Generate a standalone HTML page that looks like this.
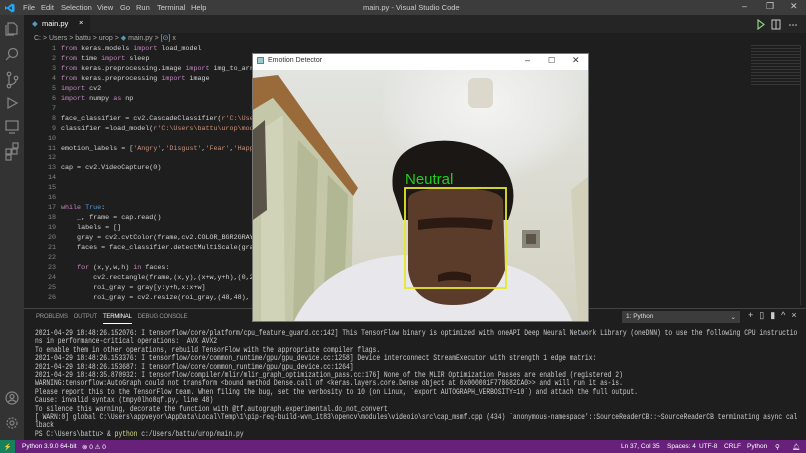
<!DOCTYPE html>
<html><head><meta charset="utf-8"><style>
*{margin:0;padding:0;box-sizing:border-box}
body{width:806px;height:453px;overflow:hidden;background:#1e1e1e;font-family:"Liberation Sans",sans-serif;position:relative;color:#ccc}
.abs{position:absolute}
#title{left:0;top:0;width:806px;height:15px;background:#3c3c3c;font-size:7.5px;color:#ccc}
#title span{position:absolute;top:3px}
#act{left:0;top:15px;width:24px;height:425px;background:#333}
#tabs{left:24px;top:15px;width:782px;height:18px;background:#252526}
#tab{left:24px;top:15px;width:66px;height:18px;background:#1e1e1e;font-size:7.5px;color:#fff}
#crumb{left:34px;top:34px;font-size:7px;color:#aaa}
.code{font-family:"Liberation Mono",monospace;font-size:6.7px;line-height:9.95px;white-space:pre}
#nums{left:30px;top:45px;width:26px;text-align:right;color:#858585}
#src{left:61px;top:45px;color:#d4d4d4}
.k{color:#c586c0}.s{color:#ce9178}.b{color:#569cd6}
#panel{left:24px;top:308px;width:782px;height:132px;background:#1e1e1e;border-top:1px solid #444}
#ptabs{left:36px;top:314px;font-size:6px;color:#999;letter-spacing:-.2px}
#term{left:35px;top:330px;font-family:"Liberation Mono",monospace;font-size:8px;line-height:8.4px;color:#ccc;white-space:pre;transform:scaleX(0.79);transform-origin:top left}
#status{left:0;top:440px;width:806px;height:13px;background:#68217a;color:#fff;font-size:6.5px}
#status span{position:absolute;top:3px}
#win{left:252px;top:53px;width:337px;height:269px;background:#fff;border:1px solid #777;overflow:hidden}
#cam{left:0;top:16px;width:337px;height:253px;overflow:hidden;background:linear-gradient(180deg,#e2e4e0 0%,#dcdcd3 40%,#d3d2c2 100%)}
</style></head><body>
<div id="title" class="abs">
<svg class="abs" style="left:5px;top:3px" width="10" height="10" viewBox="0 0 10 10"><path d="M7 0.5L9.5 1.7V8.3L7 9.5L2 5.5L0.5 6.8L0 6.3V3.7L0.5 3.2L2 4.5L7 0.5ZM7 3L4 5L7 7Z" fill="#23a9f2"/></svg>
<span style="left:23px">File</span><span style="left:41px">Edit</span><span style="left:61px">Selection</span><span style="left:97px">View</span><span style="left:120px">Go</span><span style="left:136px">Run</span><span style="left:157px">Terminal</span><span style="left:191px">Help</span>
<span style="left:363px">main.py - Visual Studio Code</span>
<span style="left:742px;top:1px;font-size:9px">–</span><span style="left:766px;top:1px;font-size:9px">❐</span><span style="left:790px;top:1px;font-size:9px">✕</span>
</div>
<div id="act" class="abs">
<svg class="abs" style="left:5px;top:6px" width="14" height="150" fill="none" stroke="#858585" stroke-width="1.2">
<path d="M3 2h6l3 3v8H3z M1 4v10h8"/>
<circle cx="8" cy="32" r="4.5"/><path d="M5 35l-4 4"/>
<circle cx="4" cy="53" r="1.8"/><circle cx="4" cy="65" r="1.8"/><circle cx="11" cy="57" r="1.8"/><path d="M4 55v8M11 59q0 4-7 5"/>
<path d="M3 77l9 5-9 5z"/>
<rect x="1" y="100" width="12" height="9"/><path d="M4 112h6"/>
<rect x="1" y="128" width="5" height="5"/><rect x="7" y="128" width="5" height="5"/><rect x="1" y="134" width="5" height="5"/><rect x="8" y="122" width="5" height="5"/>
</svg>
<svg class="abs" style="left:5px;top:376px" width="14" height="40" fill="none" stroke="#858585" stroke-width="1.2"><circle cx="7" cy="7" r="6"/><circle cx="7" cy="5.5" r="2"/><path d="M3 11q4-4 8 0"/><circle cx="7" cy="32" r="5" stroke-dasharray="2 1.3"/><circle cx="7" cy="32" r="2"/></svg>
</div>
<div id="tabs" class="abs"></div>
<div id="tab" class="abs"><span class="abs" style="left:8px;top:4px;color:#519aba">◆</span><span class="abs" style="left:18px;top:4px">main.py</span><span class="abs" style="left:55px;top:3px">×</span></div>
<svg class="abs" style="left:755px;top:19px" width="45" height="11"><path d="M3 1l6 4.5-6 4.5z" fill="none" stroke="#89d185" stroke-width="1.2"/><rect x="17" y="1" width="8" height="9" fill="none" stroke="#ccc"/><path d="M21 1v9" stroke="#ccc"/><circle cx="35" cy="6" r=".8" fill="#ccc"/><circle cx="38" cy="6" r=".8" fill="#ccc"/><circle cx="41" cy="6" r=".8" fill="#ccc"/></svg>
<div id="crumb" class="abs">C: &gt; Users &gt; battu &gt; urop &gt; <span style="color:#519aba">◆</span> main.py &gt; <span style="color:#75beff">[⊙]</span> x</div>
<div id="nums" class="abs code">1
2
3
4
5
6
7
8
9
10
11
12
13
14
15
16
17
18
19
20
21
22
23
24
25
26</div>
<div id="src" class="abs code"><span class="k">from</span> keras.models <span class="k">import</span> load_model
<span class="k">from</span> time <span class="k">import</span> sleep
<span class="k">from</span> keras.preprocessing.image <span class="k">import</span> img_to_array
<span class="k">from</span> keras.preprocessing <span class="k">import</span> image
<span class="k">import</span> cv2
<span class="k">import</span> numpy <span class="k">as</span> np

face_classifier = cv2.CascadeClassifier(<span class="s">r'C:\Users</span>
classifier =load_model(<span class="s">r'C:\Users\battu\urop\model</span>

emotion_labels = [<span class="s">'Angry'</span>,<span class="s">'Disgust'</span>,<span class="s">'Fear'</span>,<span class="s">'Happy'</span>

cap = cv2.VideoCapture(0)



<span class="k">while</span> <span class="b">True</span>:
    _, frame = cap.read()
    labels = []
    gray = cv2.cvtColor(frame,cv2.COLOR_BGR2GRAY)
    faces = face_classifier.detectMultiScale(gray
 
    <span class="k">for</span> (x,y,w,h) <span class="k">in</span> faces:
        cv2.rectangle(frame,(x,y),(x+w,y+h),(0,255
        roi_gray = gray[y:y+h,x:x+w]
        roi_gray = cv2.resize(roi_gray,(48,48),</div>
<div class="abs" style="left:751px;top:45px;width:50px;height:40px;background:repeating-linear-gradient(180deg,#555 0 1px,transparent 1px 3px);opacity:.45"></div>
<div class="abs" style="left:800px;top:45px;width:1px;height:260px;background:#333"></div>
<div id="panel" class="abs"></div>
<div id="ptabs" class="abs"><span>PROBLEMS</span>&nbsp;&nbsp;&nbsp;&nbsp;<span>OUTPUT</span>&nbsp;&nbsp;&nbsp;&nbsp;<span style="color:#fff;border-bottom:1px solid #fff;padding-bottom:3px">TERMINAL</span>&nbsp;&nbsp;&nbsp;&nbsp;<span>DEBUG CONSOLE</span></div>
<div class="abs" style="left:622px;top:311px;width:118px;height:12px;background:#3c3c3c;font-size:6.5px;color:#ddd;padding:2px 4px">1: Python<span style="float:right">⌄</span></div>
<div class="abs" style="left:748px;top:310px;font-size:9px;color:#ccc;letter-spacing:6px">+▯▮^×</div>
<div id="term" class="abs">2021-04-29 18:48:26.152076: I tensorflow/core/platform/cpu_feature_guard.cc:142] This TensorFlow binary is optimized with oneAPI Deep Neural Network Library (oneDNN) to use the following CPU instructio
ns in performance-critical operations:  AVX AVX2
To enable them in other operations, rebuild TensorFlow with the appropriate compiler flags.
2021-04-29 18:48:26.153376: I tensorflow/core/common_runtime/gpu/gpu_device.cc:1258] Device interconnect StreamExecutor with strength 1 edge matrix:
2021-04-29 18:48:26.153687: I tensorflow/core/common_runtime/gpu/gpu_device.cc:1264]
2021-04-29 18:48:35.870932: I tensorflow/compiler/mlir/mlir_graph_optimization_pass.cc:176] None of the MLIR Optimization Passes are enabled (registered 2)
WARNING:tensorflow:AutoGraph could not transform &lt;bound method Dense.call of &lt;keras.layers.core.Dense object at 0x000001F778682CA0&gt;&gt; and will run it as-is.
Please report this to the TensorFlow team. When filing the bug, set the verbosity to 10 (on Linux, `export AUTOGRAPH_VERBOSITY=10`) and attach the full output.
Cause: invalid syntax (tmpy0lho0qf.py, line 48)
To silence this warning, decorate the function with @tf.autograph.experimental.do_not_convert
[ WARN:0] global C:\Users\appveyor\AppData\Local\Temp\1\pip-req-build-wvn_it83\opencv\modules\videoio\src\cap_msmf.cpp (434) `anonymous-namespace'::SourceReaderCB::~SourceReaderCB terminating async cal
lback
PS C:\Users\battu&gt; &amp; <span style="color:#dcdc8b">python</span> c:/Users/battu/urop/main.py</div>
<div id="status" class="abs"><span style="left:0;top:0;width:15px;height:13px;background:#16825d;text-align:center;padding-top:3px">⚡</span><span style="left:22px">Python 3.9.0 64-bit</span><span style="left:82px">⊗ 0 ⚠ 0</span><span style="left:621px">Ln 37, Col 35</span><span style="left:667px">Spaces: 4</span><span style="left:699px">UTF-8</span><span style="left:724px">CRLF</span><span style="left:747px">Python</span><span style="left:775px">⚲</span><span style="left:792px">🔔︎</span></div>
<div id="win" class="abs">
<div class="abs" style="left:0;top:0;width:337px;height:16px;background:#fff;font-size:7px;color:#333"><span class="abs" style="left:4px;top:3px;width:7px;height:7px;border:1px solid #777;background:#9cc"></span><span class="abs" style="left:15px;top:3px">Emotion Detector</span><span class="abs" style="left:272px;top:1px;font-size:9px">–</span><span class="abs" style="left:295px;top:2px;font-size:8px">☐</span><span class="abs" style="left:319px;top:1px;font-size:9px">✕</span></div>
<div id="cam" class="abs">
<div class="abs" style="left:130px;top:0;width:200px;height:110px;background:radial-gradient(ellipse at 50% 30%,#f4f4f2 0%,#e8e9e6 50%,transparent 75%)"></div>
<div class="abs" style="left:215px;top:8px;width:25px;height:30px;background:#ddd8cc;border-radius:6px"></div>
<svg class="abs" style="left:0;top:0" width="337" height="253">
<path d="M0 8L25 5L105 118L100 126L20 28L0 40Z" fill="#9a6b3a"/>
<path d="M0 40L20 28L100 126L98 253L0 253Z" fill="#c4c7a8"/>
<path d="M8 60L30 45L32 253L8 253Z" fill="#d6d8bd" opacity=".7"/>
<path d="M45 70L65 90L60 253L40 253Z" fill="#b0b48e" opacity=".7"/>
<path d="M75 105L95 125L90 253L70 253Z" fill="#a7ab86" opacity=".6"/>
<path d="M0 60L12 50L14 140L0 150Z" fill="#5a5448"/>
<path d="M318 120L337 105L337 253L325 253Z" fill="#d2d0b8"/>
<rect x="269" y="160" width="18" height="18" fill="#8a8678"/><rect x="273" y="164" width="10" height="10" fill="#5a5548"/>
<path d="M40 253Q70 190 150 185L230 190Q300 200 320 253Z" fill="#e8e8ec"/>
<path d="M140 120Q135 80 175 72Q220 65 250 95Q268 120 255 150L150 150Z" fill="#1b1714"/>
<path d="M155 130Q155 118 200 118Q245 118 250 130L252 200Q240 235 200 235Q160 235 155 200Z" fill="#5b3b2a"/>
<path d="M165 150Q200 145 240 150L238 160Q200 155 165 160Z" fill="#2a1a12"/>
<path d="M185 205Q200 198 218 205L218 212Q200 208 185 212Z" fill="#2c1a12"/>
<rect x="152" y="118" width="101" height="100" fill="none" stroke="#e6e62a" stroke-width="1.8"/>
<text x="152" y="114" font-family="Liberation Sans,sans-serif" font-size="15" fill="#1fd01f">Neutral</text>
</svg>
</div>
</div>
</body></html>
